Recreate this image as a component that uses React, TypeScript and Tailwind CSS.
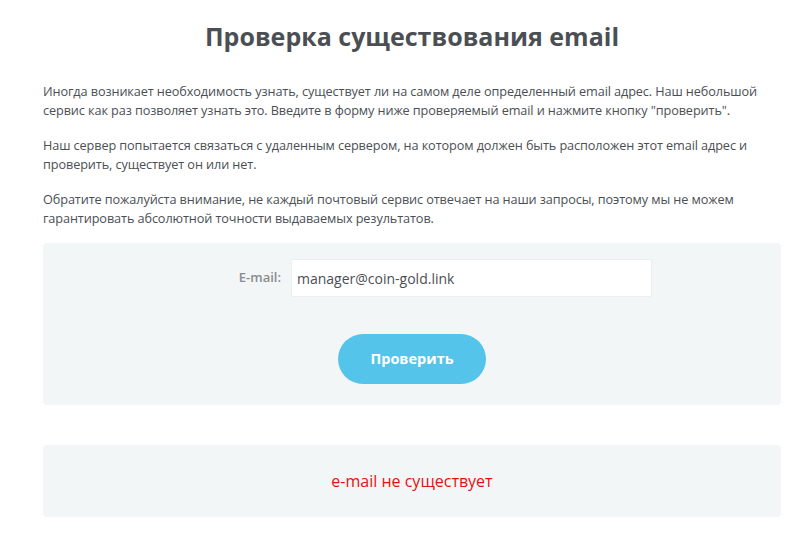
export default function App() {
  return (
    <div className="min-h-[535px] bg-white font-['Open_Sans',sans-serif] text-[#4b4f54]">
      <div className="pl-[43px] pr-[29px] pt-[20px]">
        <h1 className="text-center text-[25px] font-bold leading-[32px] text-[#4b4f54]">
          Проверка существования email
        </h1>

        <div className="mt-[30px] space-y-[16px] text-[12.7px] leading-[19px] tracking-[-0.1px]">
          <p>
            Иногда возникает необходимость узнать, существует ли на самом деле определенный email адрес. Наш небольшой
            сервис как раз позволяет узнать это. Введите в форму ниже проверяемый email и нажмите кнопку "проверить".
          </p>
          <p>
            Наш сервер попытается связаться с удаленным сервером, на котором должен быть расположен этот email адрес и
            проверить, существует он или нет.
          </p>
          <p>
            Обратите пожалуйста внимание, не каждый почтовый сервис отвечает на наши запросы, поэтому мы не можем
            гарантировать абсолютной точности выдаваемых результатов.
          </p>
        </div>

        <form
          className="mt-[15px] flex h-[162px] flex-col items-center rounded-[4px] bg-[#f3f6f7] pt-[16px]"
          onSubmit={(e) => e.preventDefault()}
        >
          <div className="flex items-center gap-[10px]">
            <label className="w-[109px] text-right text-[13px] font-semibold text-[#8a8d90]">E-mail:</label>
            <input
              type="text"
              defaultValue="manager@coin-gold.link"
              className="h-[38px] w-[361px] rounded-[2px] border border-[#eceff0] bg-white px-[5px] text-[14px] text-[#4b4f54] outline-none"
            />
          </div>
          <button
            type="submit"
            className="mt-[37px] h-[50px] w-[148px] rounded-full bg-[#55c4ea] text-[14.5px] font-bold text-white"
          >
            Проверить
          </button>
        </form>

        <div className="mt-[40px] flex h-[72px] items-center justify-center rounded-[4px] bg-[#f3f6f7]">
          <span className="text-[16px] text-[#e3120f]">e-mail не существует</span>
        </div>
      </div>
    </div>
  );
}
